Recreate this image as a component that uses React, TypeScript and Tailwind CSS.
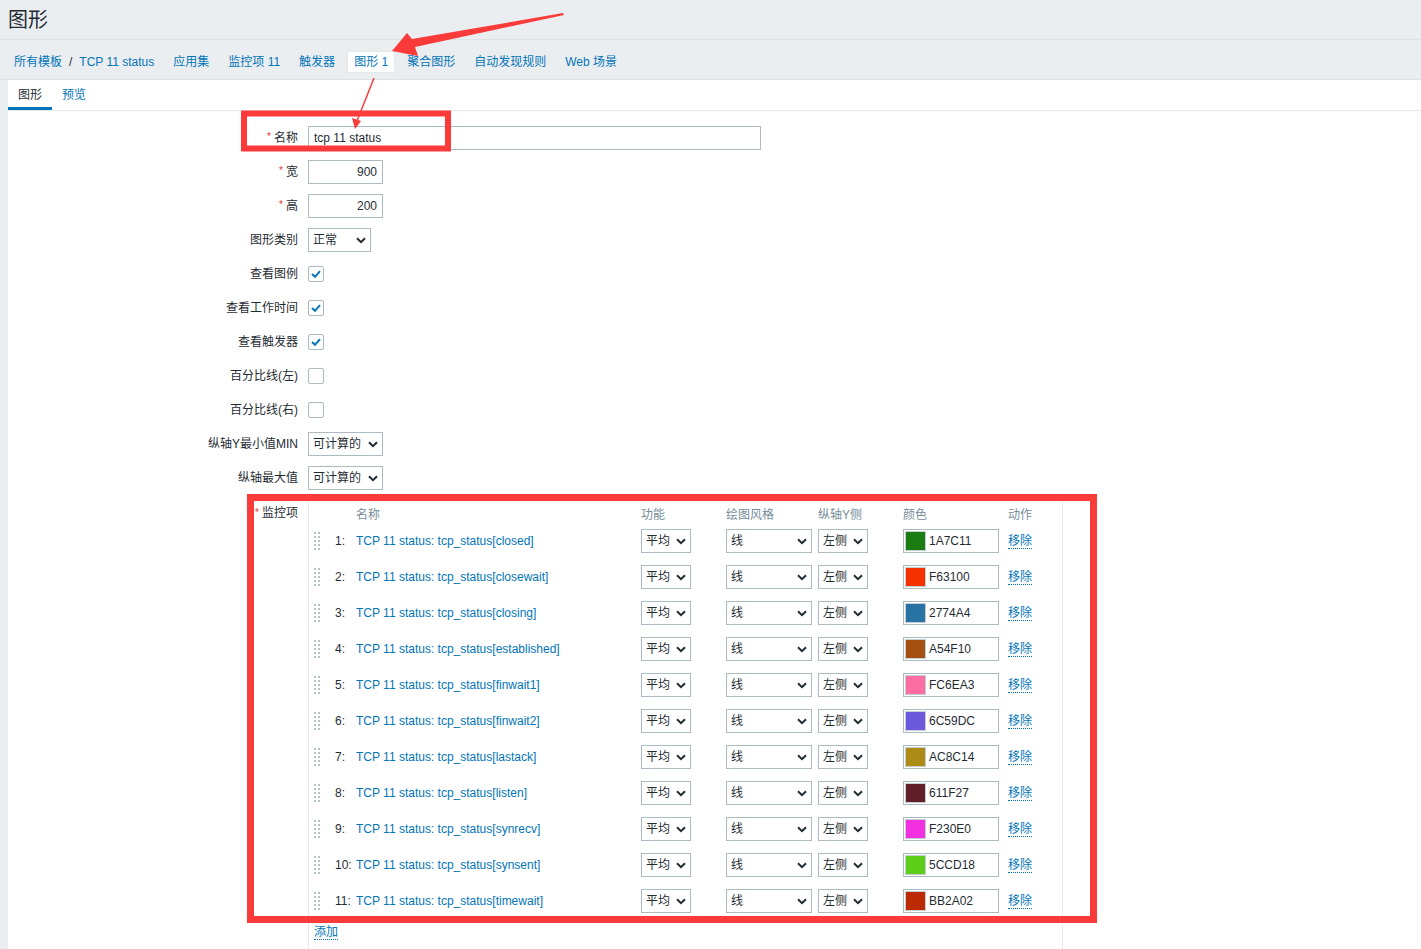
const items: [string, string][] = [
  ['closed', '1A7C11'],
  ['closewait', 'F63100'],
  ['closing', '2774A4'],
  ['established', 'A54F10'],
  ['finwait1', 'FC6EA3'],
  ['finwait2', '6C59DC'],
  ['lastack', 'AC8C14'],
  ['listen', '611F27'],
  ['synrecv', 'F230E0'],
  ['synsent', '5CCD18'],
  ['timewait', 'BB2A02'],
];

const Chevron = () => (
  <svg width="10" height="7" viewBox="0 0 10 7" className="shrink-0">
    <path d="M1 1.2 L5 5.2 L9 1.2" fill="none" stroke="#1f2c33" strokeWidth="2" />
  </svg>
);

const Select = ({ value, className }: { value: string; className: string }) => (
  <div
    className={`${className} h-[24px] border border-[#acbbc2] bg-white flex items-center justify-between pl-[4px] pr-[4px] text-[#1f2c33]`}
  >
    <span>{value}</span>
    <Chevron />
  </div>
);

const Checkbox = ({ checked }: { checked?: boolean }) => (
  <div className="w-[16px] h-[16px] border border-[#acbbc2] rounded-[2px] bg-white flex items-center justify-center">
    {checked && (
      <svg width="10" height="8" viewBox="0 0 10 8">
        <path d="M1 4 L4 6.8 L9 1.2" fill="none" stroke="#0275b8" strokeWidth="2" />
      </svg>
    )}
  </div>
);

const Handle = () => (
  <svg width="6" height="18" viewBox="0 0 6 18" className="ml-[1px]">
    {[0, 4, 8, 12, 16].map((y) => (
      <g key={y} fill="#b7c3ca">
        <rect x="0" y={y} width="2" height="2" />
        <rect x="4" y={y} width="2" height="2" />
      </g>
    ))}
  </svg>
);

const Row = ({ label, required, children }: { label: string; required?: boolean; children: React.ReactNode }) => (
  <div className="flex items-center h-[24px]">
    <div className="w-[300px] shrink-0 pr-[10px] text-right">
      {required && <span className="text-[#e33734] mr-[3px] text-[10px] align-top">*</span>}
      {label}
    </div>
    {children}
  </div>
);

export default function App() {
  return (
    <div className="relative h-[949px] overflow-hidden flex flex-col bg-[#ebeef1] text-[12px] text-[#1f2c33] font-['Liberation_Sans','Noto_Sans_CJK_SC',sans-serif]">
      <header className="h-[40px] shrink-0 border-b border-[#dde2e6] px-[8px] flex items-center">
        <h1 className="text-[20px] leading-none">图形</h1>
      </header>

      <nav className="h-[40px] shrink-0 border-b border-[#dde2e6] pt-[5px] pl-[8px] flex items-center gap-[7px] text-[#0275b8]">
        <div className="h-[20px] px-[6px] flex items-center">
          <span>所有模板</span>
          <span className="mx-[7px] text-[#1f2c33]">/</span>
          <span>TCP 11 status</span>
        </div>
        <div className="h-[20px] px-[6px] flex items-center">应用集</div>
        <div className="h-[20px] px-[6px] flex items-center">监控项 11</div>
        <div className="h-[20px] px-[6px] flex items-center">触发器</div>
        <div className="h-[20px] px-[6px] flex items-center bg-white rounded-[2px] shadow-[0_0_0_1px_#e4e8eb]">图形 1</div>
        <div className="h-[20px] px-[6px] flex items-center">聚合图形</div>
        <div className="h-[20px] px-[6px] flex items-center">自动发现规则</div>
        <div className="h-[20px] px-[6px] flex items-center">Web 场景</div>
      </nav>

      <main className="flex-1 ml-[8px] bg-white">
        <div className="h-[31px] border-b border-[#e6e9ec] flex">
          <div className="h-[30px] px-[10px] flex items-center shadow-[inset_0_-3px_0_#0275b8]">图形</div>
          <div className="h-[30px] px-[10px] flex items-center text-[#0275b8]">预览</div>
        </div>

        <div className="pt-[15px] flex flex-col gap-[10px]">
          <Row label="名称" required>
            <div className="w-[453px] h-[24px] border border-[#acbbc2] px-[5px] flex items-center">tcp 11 status</div>
          </Row>
          <Row label="宽" required>
            <div className="w-[75px] h-[24px] border border-[#acbbc2] px-[5px] flex items-center justify-end">900</div>
          </Row>
          <Row label="高" required>
            <div className="w-[75px] h-[24px] border border-[#acbbc2] px-[5px] flex items-center justify-end">200</div>
          </Row>
          <Row label="图形类别">
            <Select value="正常" className="w-[63px]" />
          </Row>
          <Row label="查看图例">
            <Checkbox checked />
          </Row>
          <Row label="查看工作时间">
            <Checkbox checked />
          </Row>
          <Row label="查看触发器">
            <Checkbox checked />
          </Row>
          <Row label="百分比线(左)">
            <Checkbox />
          </Row>
          <Row label="百分比线(右)">
            <Checkbox />
          </Row>
          <Row label="纵轴Y最小值MIN">
            <Select value="可计算的" className="w-[75px]" />
          </Row>
          <Row label="纵轴最大值">
            <Select value="可计算的" className="w-[75px]" />
          </Row>

          <div className="flex items-start mt-[1px]">
            <div className="w-[300px] shrink-0 pr-[10px] pt-[5px] leading-[14px] text-right">
              <span className="text-[#e33734] mr-[3px] text-[10px] align-top">*</span>监控项
            </div>
            <div className="w-[755px] border-l border-r border-[#e6e9ec] pl-[4px] pb-[20px]">
              <div className="grid grid-cols-[22px_21px_285px_85px_92px_85px_105px_1fr] h-[22px] pt-[7px] leading-[14px] text-[#768d99]">
                <div />
                <div />
                <div>名称</div>
                <div>功能</div>
                <div>绘图风格</div>
                <div>纵轴Y侧</div>
                <div>颜色</div>
                <div>动作</div>
              </div>
              {items.map(([key, color], i) => (
                <div
                  key={key}
                  className="grid grid-cols-[22px_21px_285px_85px_92px_85px_105px_1fr] h-[36px] items-center"
                >
                  <Handle />
                  <div>{i + 1}:</div>
                  <div className="text-[#0275b8]">TCP 11 status: tcp_status[{key}]</div>
                  <Select value="平均" className="w-[50px]" />
                  <Select value="线" className="w-[86px]" />
                  <Select value="左侧" className="w-[50px]" />
                  <div className="w-[96px] h-[24px] border border-[#acbbc2] flex items-center pl-[1px]">
                    <div className="w-[21px] h-[20px] border border-[#c5ced3]" style={{ backgroundColor: `#${color}` }} />
                    <span className="ml-[3px]">{color}</span>
                  </div>
                  <div>
                    <span className="text-[#0275b8] border-b border-dotted border-[#0275b8] leading-[14px] inline-block">移除</span>
                  </div>
                </div>
              ))}
              <div className="h-[26px] flex items-center pl-[1px]">
                <span className="text-[#0275b8] border-b border-dotted border-[#0275b8] leading-[14px] inline-block">添加</span>
              </div>
            </div>
          </div>
        </div>
      </main>

      {/* red annotations drawn over the screenshot */}
      <svg className="absolute inset-0 pointer-events-none" width="1421" height="949" viewBox="0 0 1421 949">
        <polygon points="563,13 412,39 407,33 392,51 418,56 415,47 564,15" fill="#fb3a3a" />
        <line x1="374" y1="78" x2="357" y2="121" stroke="#fb3a3a" strokeWidth="1.5" />
        <polygon points="355,129 352,118 361,121" fill="#fb3a3a" />
        <rect x="244" y="113.5" width="204" height="35" fill="none" stroke="#fb3a3a" strokeWidth="6" />
        <rect x="250.5" y="497.5" width="843" height="422" fill="none" stroke="#fb3a3a" strokeWidth="7" />
      </svg>
    </div>
  );
}
